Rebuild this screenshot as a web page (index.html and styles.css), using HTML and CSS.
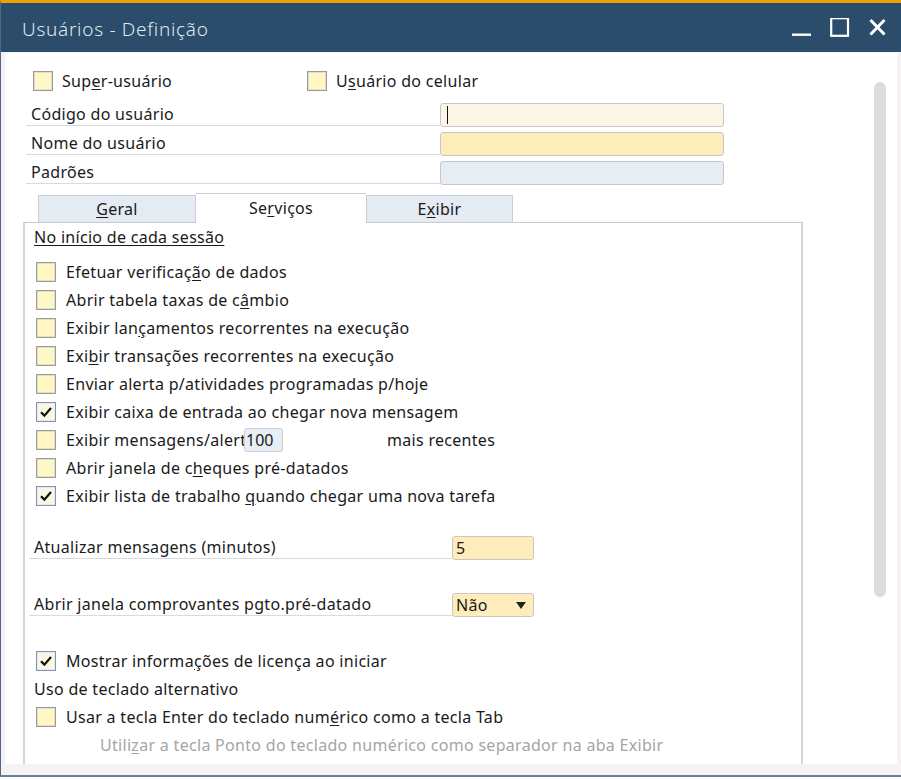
FILE: index.html
```html
<!DOCTYPE html>
<html lang="pt">
<head>
<meta charset="utf-8">
<title>Usuários - Definição</title>
<link rel="stylesheet" href="styles.css">
</head>
<body>
<div class="window">
  <div class="titlebar">
    <div class="title">Usuários - Definição</div>
    <div class="controls">
      <svg class="ctl" width="20" height="20" viewBox="0 0 20 20"><rect x="0" y="15.5" width="19" height="2.4" fill="#fff"/></svg>
      <svg class="ctl" width="20" height="20" viewBox="0 0 20 20"><rect x="1.2" y="0.2" width="16.8" height="17.6" fill="none" stroke="#fff" stroke-width="2.2"/></svg>
      <svg class="ctl" width="20" height="20" viewBox="0 0 20 20"><path d="M2.5 2 L16.5 16.5 M16.5 2 L2.5 16.5" stroke="#fff" stroke-width="3" fill="none"/></svg>
    </div>
  </div>
  <div class="client">
    <div class="main">
      <div class="toprow">
        <label class="chk first"><span class="box"></span><span>Sup<u>e</u>r-usuário</span></label>
        <label class="chk"><span class="box"></span><span>U<u>s</u>uário do celular</span></label>
      </div>
      <div class="form">
        <div class="frow"><div class="flabel">Código do usuário</div><div class="field cream"><span class="caret"></span></div></div>
        <div class="frow"><div class="flabel">Nome do usuário</div><div class="field yellow"></div></div>
        <div class="frow"><div class="flabel">Padrões</div><div class="field blue"></div></div>
      </div>
      <div class="tabs">
        <div class="tab"><u>G</u>eral</div>
        <div class="tab active">Se<u>r</u>viços</div>
        <div class="tab">E<u>x</u>ibir</div>
      </div>
      <div class="panel">
        <div class="heading"><u>No início de cada sessão</u></div>
        <div class="list">
          <div class="chk row"><span class="box"></span><span>Efetuar verificaç<u>ã</u>o de dados</span></div>
          <div class="chk row"><span class="box"></span><span>Abrir tabela taxas de c<u>â</u>mbio</span></div>
          <div class="chk row"><span class="box"></span><span>Exibir lan<u>ç</u>amentos recorrentes na execução</span></div>
          <div class="chk row"><span class="box"></span><span>Exi<u>b</u>ir transações recorrentes na execução</span></div>
          <div class="chk row"><span class="box"></span><span>Enviar alerta p/atividades programadas p/hoje</span></div>
          <div class="chk row"><span class="box on"><svg width="14" height="14" viewBox="0 0 14 14"><path d="M2 7.2 L5.4 10.6 L12 3" stroke="#111" stroke-width="2.2" fill="none"/></svg></span><span>Exibir caixa de entrada ao chegar nova mensagem</span></div>
          <div class="chk row"><span class="box"></span><span class="clip">Exibir mensagens/alertas</span><span class="num">100</span><span class="more">mais recentes</span></div>
          <div class="chk row"><span class="box"></span><span>Abrir janela de c<u>h</u>eques pré-datados</span></div>
          <div class="chk row"><span class="box on"><svg width="14" height="14" viewBox="0 0 14 14"><path d="M2 7.2 L5.4 10.6 L12 3" stroke="#111" stroke-width="2.2" fill="none"/></svg></span><span>Exibir lista de trabalho <u>q</u>uando chegar uma nova tarefa</span></div>
        </div>
        <div class="frow2 r-atual"><div class="plabel">Atualizar mensagens (minutos)</div><div class="small yellow">5</div></div>
        <div class="frow2 r-abrir"><div class="plabel">Abrir janela comprovantes pgto.pré-datado</div><div class="small yellow sel"><span>Não</span><svg width="10" height="7" viewBox="0 0 10 7"><path d="M0 0 H10 L5 7 Z" fill="#222"/></svg></div></div>
        <div class="chk row r-lic"><span class="box on"><svg width="14" height="14" viewBox="0 0 14 14"><path d="M2 7.2 L5.4 10.6 L12 3" stroke="#111" stroke-width="2.2" fill="none"/></svg></span><span>Mostrar informa<u>ç</u>ões de licença ao iniciar</span></div>
        <div class="plain">Uso de teclado alternativo</div>
        <div class="chk row"><span class="box"></span><span>Usar a tecla Enter do teclado num<u>é</u>rico como a tecla Tab</span></div>
        <div class="disabled">Utili<u>z</u>ar a tecla Ponto do teclado numérico como separador na aba Exibir</div>
      </div>
    </div>
    <div class="vscroll"></div>
  </div>
</div>
</body>
</html>
```
FILE: styles.css
```css
* { box-sizing: border-box; }
html, body { margin: 0; padding: 0; }
body {
  width: 901px;
  height: 780px;
  overflow: hidden;
  background: #ffffff;
  font-family: "Noto Sans", "Open Sans", sans-serif;
  font-size: 16px;
  letter-spacing: 0.3px;
  color: #1a1a1a;
}
u { text-decoration: underline; text-underline-offset: 2px; }

.window {
  width: 901px;
  height: 777px;
  border-top: 3px solid #e9a300;
  border-left: 1px solid #4d6a88;
  border-bottom: 2px solid #6b8399;
  background: #f5f1f4;
  display: flex;
  flex-direction: column;
}
.titlebar {
  flex: none;
  height: 49px;
  background: #2b4d6b;
  display: flex;
  align-items: center;
  padding-left: 21px;
  color: #dfe8f0;
  font-size: 19px;
  font-weight: 300;
  letter-spacing: 0.7px;
}
.title { flex: 1; padding-top: 3px; }
.controls { display: flex; align-items: center; gap: 18px; padding-right: 13px; }
.ctl { display: block; }

.client {
  flex: 1;
  margin: 1px 4px 11px 4px;
  background: #ffffff;
  display: flex;
}
.main { flex: 1; display: flex; flex-direction: column; }
.vscroll {
  flex: none;
  width: 12px;
  height: 515px;
  margin: 29px 11px 0 1px;
  background: #dcdcdc;
  border-radius: 6px;
}

.chk { display: flex; align-items: center; }
.box {
  flex: none;
  width: 20px;
  height: 20px;
  margin-right: 9px;
  border: 1px solid #9a9a9a;
  box-shadow: inset 0 0 0 1px #e2dfc8;
  background: #fff8c6;
  display: flex;
  align-items: center;
  justify-content: center;
}
.box.on { border-color: #7b96b6; background: #fbf8e2; box-shadow: inset 0 0 0 1px #e6eaf0; }

.toprow { display: flex; height: 28px; margin-top: 14px; padding-left: 28px; }
.toprow .first { width: 274px; }

.form { margin-top: 7px; padding-left: 21px; display: flex; flex-direction: column; gap: 1px; }
.frow { display: flex; height: 28px; }
.flabel {
  width: 414px;
  height: 24px;
  padding: 1px 0 0 5px;
  line-height: 22px;
  border-bottom: 1px solid #d6dbe2;
}
.field {
  width: 284px;
  height: 24px;
  margin-top: 1px;
  border: 1px solid #c7c7c7;
  border-radius: 3px;
  display: flex;
  align-items: center;
}
.cream { background: #fdf6e6; }
.yellow { background: #feedbb; }
.blue { background: #e6edf4; }
.caret { display: block; width: 1px; height: 18px; margin-left: 6px; background: #111; }

.tabs { display: flex; align-items: flex-end; height: 29px; margin-top: 5px; padding-left: 33px; position: relative; z-index: 1; }
.tab {
  height: 27px;
  border: 1px solid #c9ced4;
  border-bottom: none;
  background: #e4ebf3;
  text-align: center;
  line-height: 26px;
}
.tab:nth-child(1) { width: 158px; }
.tab:nth-child(2) { width: 170px; }
.tab:nth-child(3) { width: 147px; }
.tab.active {
  height: 30px;
  margin-bottom: -1px;
  background: #ffffff;
  border-color: #cccccc;
  line-height: 29px;
  border-left: none;
  border-right: none;
}

.panel {
  flex: 1;
  width: 780px;
  margin-left: 18px;
  border-top: 1px solid #c8c8c8;
  border-left: 2px solid #d6d6d6;
  border-right: 2px solid #d6d6d6;
  padding-left: 4px;
  display: flex;
  flex-direction: column;
}
.heading { height: 28px; line-height: 28px; padding-left: 5px; }
.list { margin-top: 7px; }
.row { height: 28px; padding-left: 7px; }
.row .box { margin-right: 10px; }
.clip { width: 178px; overflow: hidden; white-space: nowrap; }
.num {
  width: 39px;
  height: 24px;
  border: 1px solid #c9ced4;
  border-radius: 3px;
  background: #e8eef5;
  padding-left: 1px;
  line-height: 22px;
  letter-spacing: 0;
}
.more { margin-left: 104px; }

.frow2 { display: flex; height: 28px; }
.r-atual { margin-top: 24px; }
.r-abrir { margin-top: 29px; }
.r-lic { margin-top: 28px; }
.plabel {
  width: 423px;
  height: 25px;
  padding: 2px 0 0 5px;
  line-height: 22px;
  border-bottom: 1px solid #d6dbe2;
}
.small {
  width: 82px;
  height: 24px;
  margin-top: 2px;
  border: 1px solid #c7c7c7;
  border-radius: 3px;
  padding-left: 3px;
  line-height: 22px;
}
.sel { display: flex; align-items: center; justify-content: space-between; padding-right: 7px; }
.plain { height: 28px; line-height: 28px; padding-left: 5px; }
.disabled { height: 28px; line-height: 28px; padding-left: 71px; color: #a5a5a5; }
```
